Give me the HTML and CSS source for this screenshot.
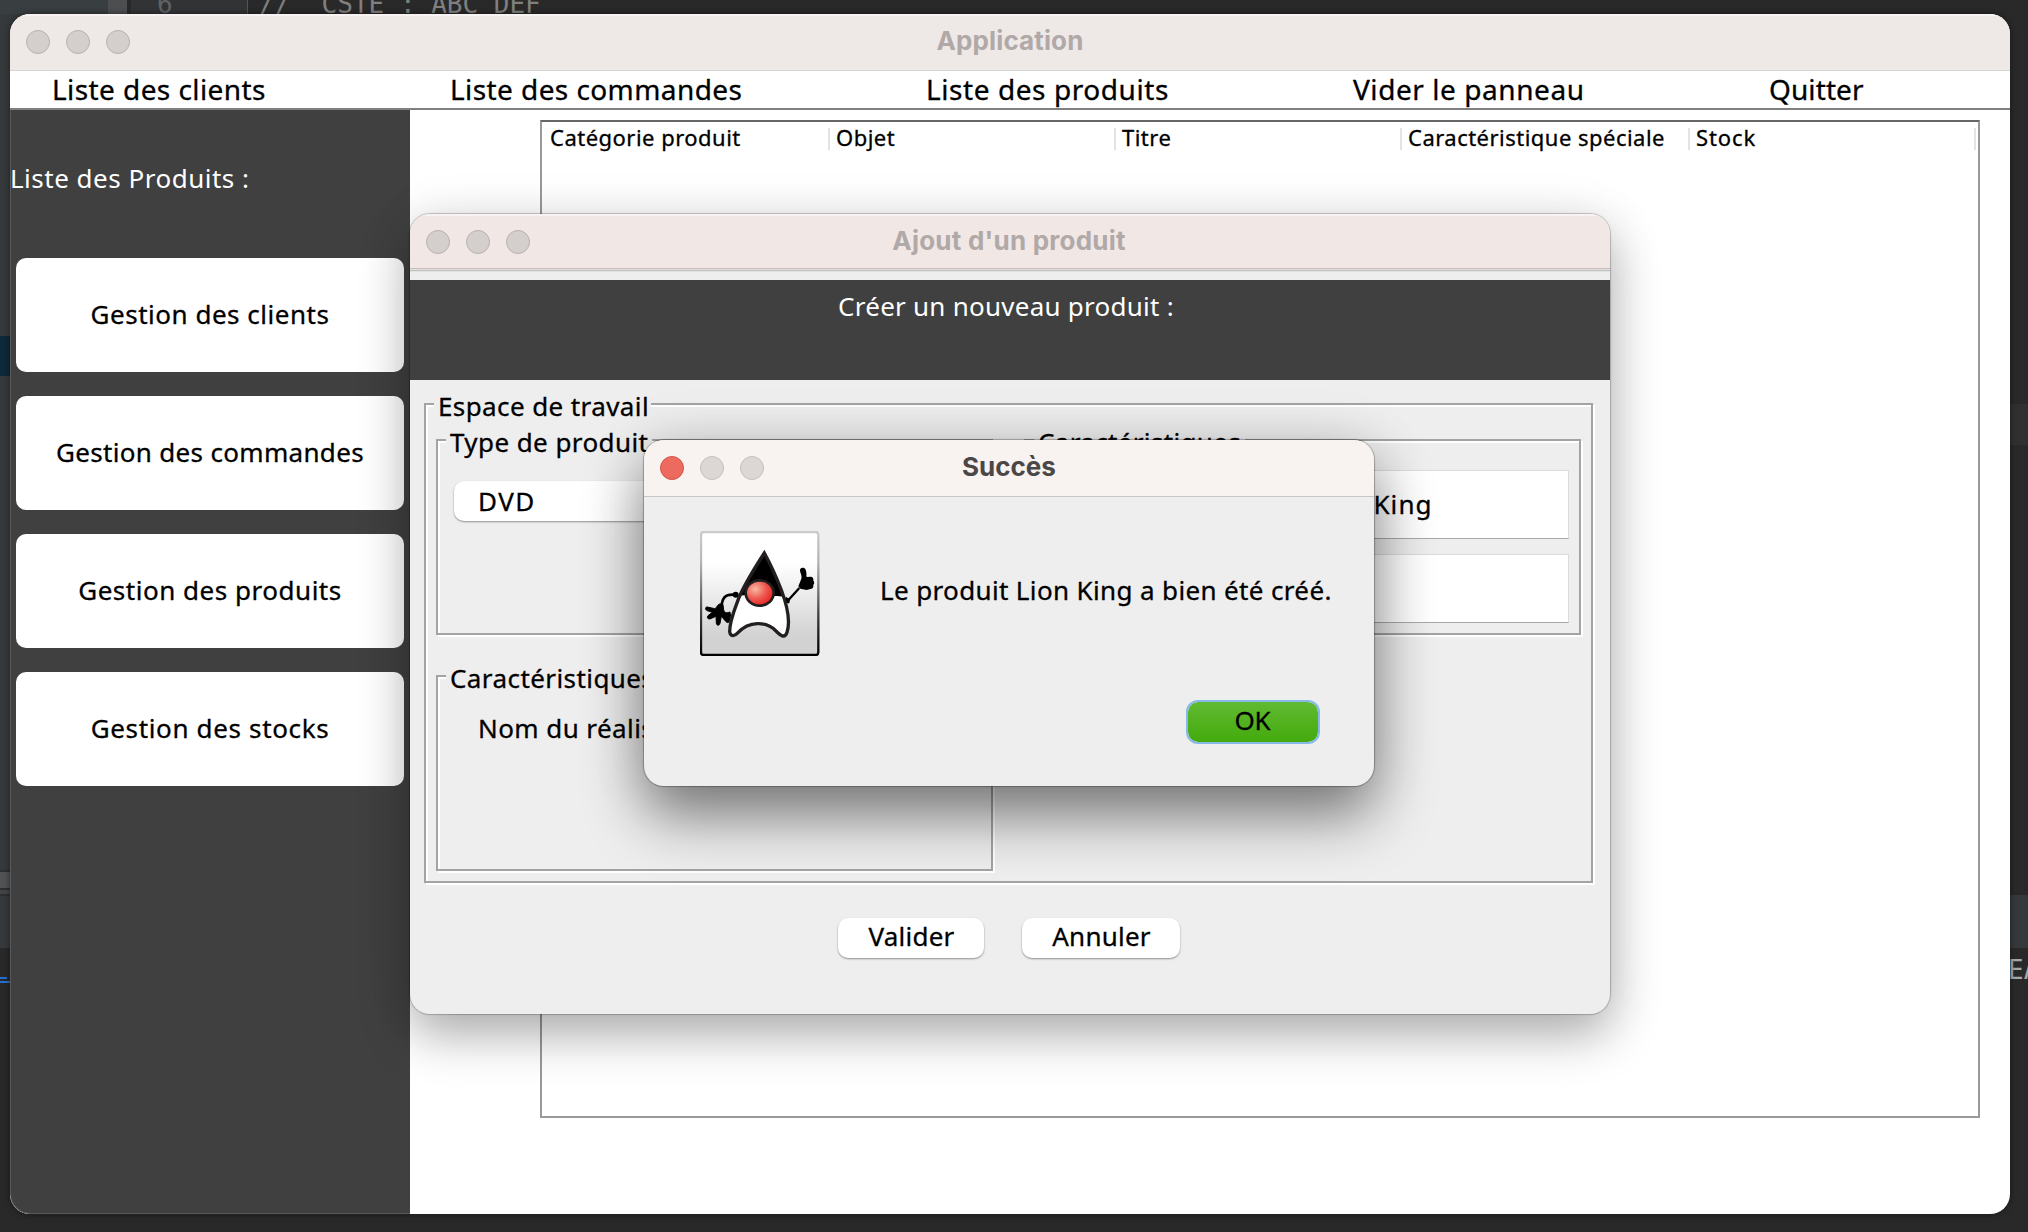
FILE: index.html
```html
<!DOCTYPE html>
<html lang="fr">
<head>
<meta charset="utf-8">
<title>Application</title>
<link rel="stylesheet" href="styles.css">
</head>
<body>
<div class="desktop">
  <div class="editor" aria-hidden="true">
    <div class="editor-top">
      <div class="tree"></div>
      <div class="tree-scroll"></div>
      <div class="gutter">6</div>
      <div class="code">//&nbsp; CSTE : ABC DEF</div>
    </div>
    <div class="edge edge-left">
      <i class="strip panel-a"></i><i class="strip selected"></i><i class="strip panel-b"></i>
      <i class="strip scrollbar"></i><i class="strip split"></i><i class="strip panel-c"></i>
      <i class="strip console"></i><i class="strip dash"></i><i class="strip link"></i>
    </div>
    <div class="edge edge-right">
      <i class="strip highlight"></i><i class="strip header"></i><span class="console-text">EA</span>
    </div>
  </div>

  <section class="window app">
    <header class="titlebar">
      <div class="lights"><i></i><i></i><i></i></div>
      <h1>Application</h1>
    </header>
    <nav class="menu">
      <span>Liste des clients</span><span>Liste des commandes</span><span class="wide">Liste des produits</span><span class="wide">Vider le panneau</span><span class="tight">Quitter</span>
    </nav>
    <div class="content">
      <aside class="sidebar">
        <p>Liste des Produits :</p>
        <button>Gestion des clients</button>
        <button class="long">Gestion des commandes</button>
        <button>Gestion des produits</button>
        <button class="loose">Gestion des stocks</button>
      </aside>
      <main class="main">
        <div class="table">
          <div class="thead">
            <span>Catégorie produit</span><span>Objet</span><span>Titre</span><span>Caractéristique spéciale</span><span class="stock">Stock</span>
          </div>
        </div>
      </main>
    </div>
  </section>

  <section class="window product">
    <header class="titlebar">
      <div class="lights"><i></i><i></i><i></i></div>
      <h1>Ajout d'un produit</h1>
    </header>
    <div class="band">Créer un nouveau produit :</div>
    <div class="group workspace">
      <div class="legend legend-work">Espace de travail</div>
      <div class="groups">
        <div class="group type">
          <div class="legend">Type de produit</div>
          <div class="combo">DVD</div>
        </div>
        <div class="group features">
          <div class="legend">Caractéristiques</div>
          <div class="field">Lion King</div>
          <div class="field"></div>
        </div>
        <div class="group details">
          <div class="legend">Caractéristiques</div>
          <div class="label">Nom du réalisateur</div>
        </div>
      </div>
    </div>
    <footer class="actions">
      <button class="valider">Valider</button>
      <button class="annuler">Annuler</button>
    </footer>
  </section>

  <section class="window alert">
    <header class="titlebar">
      <div class="lights"><i class="close"></i><i></i><i></i></div>
      <h1>Succès</h1>
    </header>
    <div class="alert-body">
      <svg class="duke" viewBox="30 33 360 375" width="120" height="125">
        <defs>
          <linearGradient id="frame" x1="0" y1="0" x2="0" y2="1"><stop offset="0" stop-color="#cbcbcb"/><stop offset=".25" stop-color="#b5b5b5"/><stop offset=".7" stop-color="#3a3a3a"/><stop offset="1" stop-color="#000"/></linearGradient>
          <linearGradient id="paper" x1="0" y1="0" x2="0" y2="1"><stop offset=".25" stop-color="#fff"/><stop offset=".85" stop-color="#d2d2d2"/></linearGradient>
          <radialGradient id="nose" cx=".35" cy=".35" r=".7"><stop offset="0" stop-color="#f9b9a4"/><stop offset=".55" stop-color="#ee5750"/><stop offset="1" stop-color="#e8211f"/></radialGradient>
        </defs>
        <rect x="33" y="36" width="352" height="369" rx="8" fill="url(#paper)" stroke="url(#frame)" stroke-width="7"/>
        <path d="M138 223C112 223 98 226 95 256" fill="none" stroke="#000" stroke-width="8"/>
        <circle cx="137" cy="224" r="9"/>
        <path d="M120 276C108 280 104 278 101 270L99 254C93 249 84 251 79 263L74 266L52 261C45 260 45 270 52 272L67 277L54 287C49 293 55 299 62 296L78 289L79 309C79 317 88 318 90 310L94 289L108 305C116 312 121 304 118 297L122 290Z" stroke="#000" stroke-width="3"/>
        <path d="M292 244L328 204" fill="none" stroke="#000" stroke-width="7"/>
        <path d="M287 230L300 238L298 250L288 250Z"/>
        <path d="M334 176C337 168 330 158 330 151C329 142 344 141 347 149C351 158 348 167 350 171L363 170C370 171 371 178 370 182C374 186 373 191 370 194C371 203 367 207 361 207L350 210L331 206L325 199Z"/>
        <path d="M223 99C195 143 166 187 146 235C136 264 119 300 119 335C121 353 136 347 144 338C176 304 229 302 258 333C271 346 284 357 291 337C302 304 290 253 274 210C257 166 240 130 223 99Z" fill="#fff"/>
        <path d="M223 99C195 143 165 188 145 228C174 222 190 222 208 226C230 233 255 223 282 231C267 180 243 131 223 99Z"/>
        <path d="M223 99C195 143 166 187 146 235C136 264 119 300 119 335C121 353 136 347 144 338C176 304 229 302 258 333C271 346 284 357 291 337C302 304 290 253 274 210C257 166 240 130 223 99Z" fill="none" stroke="#231f20" stroke-width="10"/>
        <ellipse cx="209" cy="219" rx="42" ry="38" fill="url(#nose)" stroke="#231f20" stroke-width="8"/>
      </svg>
      <p>Le produit Lion King a bien été créé.</p>
      <button class="ok">OK</button>
    </div>
  </section>
</div>
</body>
</html>
```
FILE: styles.css
```css
* { box-sizing: border-box; }

body {
  margin: 0;
  background: #292929;
  color: #000;
  font: 26px/36px "Noto Sans", "Open Sans", sans-serif;
  letter-spacing: .42px;
  -webkit-text-stroke: .3px currentColor;
}

p, h1 { margin: 0; }
span, p, .legend, .label, .band, .combo, .field, button { white-space: nowrap; }

button {
  display: flex;
  align-items: center;
  justify-content: center;
  border: 0;
  padding: 0;
  background: #fff;
  color: #000;
  font: inherit;
  letter-spacing: inherit;
}

.desktop { position: relative; width: 2028px; height: 1232px; overflow: hidden; }

/* Code editor behind the windows */
.editor { position: absolute; inset: 0; font-family: "DejaVu Sans Mono", monospace; letter-spacing: 0; -webkit-text-stroke: 0; }
.editor-top { display: flex; height: 16px; line-height: 9px; }
.tree { width: 108px; background: #393e41; }
.tree-scroll { width: 19px; margin-right: 4px; background: #4c4e50; }
.gutter { width: 117px; padding-left: 26px; background: #313335; border-right: 1px solid #555; color: #606366; }
.code { padding-left: 11px; color: #808080; white-space: pre; }
.edge { position: absolute; top: 14px; bottom: 0; width: 22px; }
.edge-left { left: 0; }
.edge-right { left: 2008px; width: 20px; }
.strip { display: block; }
.panel-a { height: 322px; background: #36393b; }
.selected { height: 40px; background: #0e293c; }
.panel-b { height: 494px; background: #36393b; }
.scrollbar { height: 20px; background: #505254; border: solid #2d2f30; border-width: 2px 0; }
.split { height: 6px; background: #424446; border-bottom: 2px solid #2d2f30; }
.panel-c { height: 52px; background: #36393b; }
.console { height: 29px; background: #292929; }
.dash { width: 7px; height: 2px; background: #2370d0; }
.link { height: 2px; margin-top: 2px; background: #2370d0; }
.highlight { height: 41px; margin-top: 390px; background: #303030; }
.header { height: 53px; margin-top: 450px; background: #36393b; }
.console-text { display: block; margin-top: 4px; color: #a8a8a8; }

/* Windows */
.window {
  position: absolute;
  display: flex;
  flex-direction: column;
  overflow: hidden;
  border-radius: 20px;
  background: #eee;
}

.titlebar {
  position: relative;
  display: flex;
  flex: none;
  align-items: center;
  justify-content: center;
  height: 57px;
  padding-bottom: 2px;
  border-bottom: 1px solid #c9c9c9;
}
.titlebar h1 { font: bold 26px/32px Inter, Roboto, sans-serif; letter-spacing: .12px; color: #b0a9a8; -webkit-text-stroke: 0; }

.lights { position: absolute; left: 16px; top: 16px; display: flex; gap: 16px; }
.lights i { width: 24px; height: 24px; border: 1px solid #b7b1b0; border-radius: 50%; background: #d4cecd; }

.app { left: 10px; top: 14px; width: 2000px; height: 1200px; background: #fff; box-shadow: 0 0 6px rgba(0,0,0,.5); }
.app .titlebar { background: #eee8e7; box-shadow: inset 0 2px #f7f3f2; border-color: #d5d5d5; }

.menu {
  display: grid;
  flex: none;
  grid-template-columns: 398px 476px 427px 416px 1fr;
  height: 39px;
  padding-left: 42px;
  border-bottom: 2px solid #808080;
  font-size: 28px;
  line-height: 37px;
  letter-spacing: .42px;
}
.menu .wide { letter-spacing: .57px; }
.menu .tight { letter-spacing: .1px; }

.content { display: flex; flex: 1; }
.sidebar {
  display: flex;
  flex-direction: column;
  gap: 24px;
  width: 400px;
  padding: 50px 6px 0;
  border-left: 1px solid #5a5a5a;
  border-bottom: 1px solid #5a5a5a;
  border-bottom-left-radius: 20px;
  background: #404040;
}
.sidebar p { margin: 0 0 38px -7px; color: #fff; letter-spacing: .5px; -webkit-text-stroke: 0; }
.sidebar button { flex: none; height: 114px; margin-left: -1px; padding-bottom: 2px; border-radius: 10px; letter-spacing: .52px; }
.sidebar .long { letter-spacing: .32px; }
.sidebar .loose { letter-spacing: .65px; }

.main { flex: 1; padding: 10px 30px 96px 130px; }
.table { height: 998px; border: 2px solid #999; border-top-color: #666; }
.thead { display: grid; grid-template-columns: 288px 286px 286px 288px 286px; height: 28px; padding-top: 6px; font-size: 22px; line-height: 22px; letter-spacing: .48px; }
.thead span { height: 22px; padding-left: 6px; border-right: 2px solid #e3e3e3; line-height: 18px; }
.thead span:first-child { padding-left: 8px; }
.thead .stock { letter-spacing: .9px; }

/* Product form */
.product { left: 410px; top: 214px; width: 1200px; height: 800px; box-shadow: 0 0 1px 1px rgba(0,0,0,.22), 0 20px 50px rgba(0,0,0,.32), 0 0 60px rgba(0,0,0,.05); }
.product .titlebar { height: 58px; background: #f1e7e5; border-bottom: 0; box-shadow: inset 0 2px #f8f3f2, inset 0 -1px #e2e2e2, inset 0 -2px #c2c2c2, inset 0 -3px #e3dedd, inset 0 -4px #c9bcba; padding: 0 2px 5px 0; }
.product h1 { letter-spacing: .22px; }
.band { flex: none; height: 100px; margin-top: 8px; padding: 8px 8px 0 0; background: #404040; color: #fff; text-align: center; letter-spacing: .25px; -webkit-text-stroke: 0; }

.group {
  position: relative;
  border: 2px solid #a3a3a3;
  box-shadow: 2px 2px #fff, inset 2px 2px #fff;
}
.legend { position: absolute; left: 8px; top: -17px; padding: 0 4px; background: #eee; line-height: 36px; }
.legend-work { padding-right: 2px; letter-spacing: .4px; }
.features .legend { letter-spacing: .34px; }
.workspace { flex: none; width: 1169px; height: 480px; margin: 23px 0 0 14px; }
.groups { display: grid; grid-template: 196px 196px / 557px 557px; gap: 40px 31px; padding: 34px 10px 0; }
.combo { width: 500px; height: 40px; margin: 40px 0 0 16px; padding-left: 24px; border-radius: 10px; background: #fff; box-shadow: 0 1px 2px rgba(0,0,0,.4); line-height: 40px; letter-spacing: 1.5px; }
.features { padding: 29px 10px 0 250px; }
.field { height: 69px; margin-bottom: 15px; padding-left: 32px; border: 1px solid #dcdcdc; border-bottom: 1px solid #a9a9a9; background: #fff; line-height: 66px; letter-spacing: 1.1px; }
.label { margin: 33px 0 0 40px; }

.actions { display: flex; gap: 38px; margin: 35px 0 0 428px; }
.actions button { height: 40px; padding: 0 0 5px 1px; border-radius: 10px; box-shadow: 0 1px 2px rgba(0,0,0,.4); letter-spacing: .22px; }
.valider { width: 146px; }
.annuler { width: 158px; }

/* Confirmation message */
.alert { left: 644px; top: 440px; width: 730px; height: 346px; box-shadow: 0 0 1px 1px rgba(0,0,0,.28), 0 30px 60px rgba(0,0,0,.48), 0 0 60px rgba(0,0,0,.1); }
.alert .titlebar { background: #f8f2f0; border-color: #c6c6c6; }
.alert h1 { color: #4a4746; letter-spacing: 0; }
.alert .lights i { background: #dcd7d5; border-color: #c3bebc; }
.alert .lights .close { background: #ec6a5e; border-color: #d35448; }
.alert-body { display: grid; grid-template: 125px 44px / 120px 1fr 134px; gap: 44px 0; padding: 34px 54px 0 56px; }
.alert-body p { grid-column: 2 / 4; padding: 41px 0 0 60px; letter-spacing: .36px; }
.ok { grid-column: 3; padding: 0 1px 5px 0; border: 2px solid #86b9e8; border-radius: 12px; background: linear-gradient(#62ba32, #43aa0c) padding-box; letter-spacing: -.2px; }
```
